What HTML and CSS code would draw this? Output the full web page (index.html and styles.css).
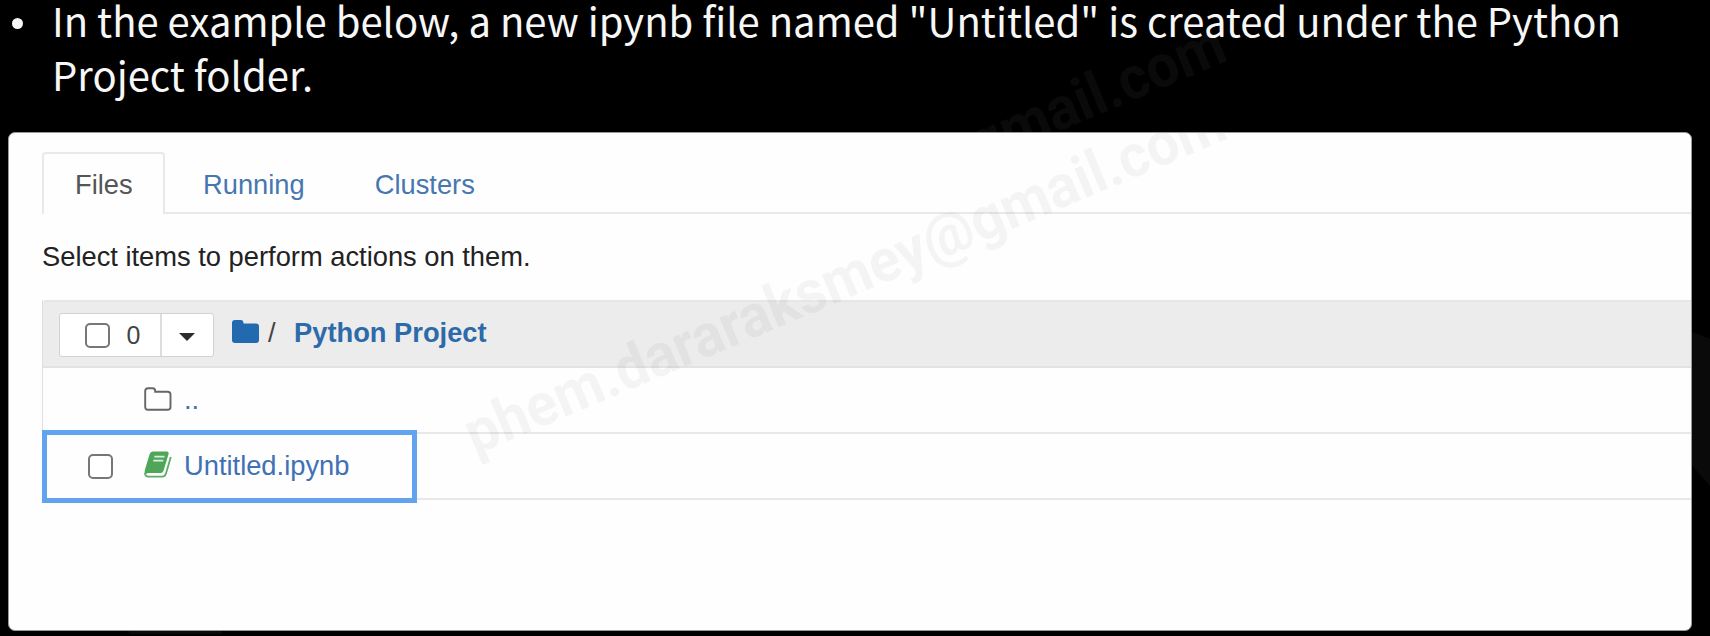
FILE: index.html
```html
<!DOCTYPE html>
<html lang="en">
<head>
<meta charset="utf-8">
<title>Jupyter file list</title>
<link rel="stylesheet" href="styles.css">
</head>
<body>
<main class="slide">
  <svg class="mark mark-dark" width="1710" height="636" viewBox="0 0 1710 636">
    <text transform="translate(475 377) rotate(-22.8)" textLength="819" lengthAdjust="spacingAndGlyphs">phem.dararaksmey@gmail.com</text>
    <path d="M1690 331L1710 339V486L1690 463Z"/>
    <path d="M129 630H222V634H129Z"/>
  </svg>
  <ul class="heading">
    <li>In the example below, a new ipynb file named "Untitled" is created under the Python<br>Project folder.</li>
  </ul>
  <section class="panel">
    <nav class="tabs">
      <a class="tab active">Files</a>
      <a class="tab running">Running</a>
      <a class="tab">Clusters</a>
    </nav>
    <p class="hint">Select items to perform actions on them.</p>
    <div class="list">
      <div class="toolbar">
        <div class="selector">
          <div class="select-all"><span class="box"></span><span>0</span></div>
          <div class="dropdown"><span class="caret"></span></div>
        </div>
        <svg class="home" width="27" height="23" viewBox="0 0 27 23"><path d="M3 0H9Q11.500 0 11.500 3.500H24Q27 3.500 27 6.500V20Q27 23 24 23H3Q0 23 0 20V3Q0 0 3 0Z" fill="#2369b0"/></svg>
        <span class="slash">/</span>
        <span class="crumb">Python Project</span>
      </div>
      <div class="row">
        <span class="check-cell"></span>
        <svg class="icon" width="28" height="24" viewBox="0 0 28 24"><path d="M4 1.200H8.500Q11.200 1.200 11.200 4V4.800H23.500Q26.500 4.800 26.500 7.500V20Q26.500 22.800 23.500 22.800H4Q1.200 22.800 1.200 20V4Q1.200 1.200 4 1.200Z" fill="none" stroke="#666" stroke-width="1.900"/></svg>
        <a class="name">..</a>
      </div>
      <div class="row">
        <span class="check-cell"><span class="box"></span></span>
        <svg class="icon" width="28" height="27" viewBox="0 0 28 27">
          <path d="M8.800 .5H22.500Q25.300 .5 24.500 3.300L19.600 19.500Q18.800 22 16.500 22H4.500Q2.800 22 2.500 23Q.2 22 .8 19.200L5.500 3.500Q6.500 .5 8.800 .5Z" fill="#4fa659"/>
          <path d="M26.800 6L22 22.400Q21 25.600 18 25.600H4.500Q1 25.600 .9 21.500" fill="none" stroke="#5bae65" stroke-width="1.800"/>
          <path d="M10.300 5.700H20.500M9.300 9.600H19.300" stroke="#d9f0dc" stroke-width="1.700"/>
        </svg>
        <a class="name">Untitled.ipynb</a>
        <span class="highlight"></span>
      </div>
    </div>
    <svg class="mark mark-light" width="1684" height="499" viewBox="9 133 1684 499">
      <text transform="translate(475 455) rotate(-22.8)" textLength="819" lengthAdjust="spacingAndGlyphs">phem.dararaksmey@gmail.com</text>
    </svg>
  </section>
</main>
</body>
</html>
```
FILE: styles.css
```css
* { box-sizing: border-box; }
body { margin: 0; background: #000; }
.slide {
  position: relative;
  width: 1710px;
  height: 636px;
  overflow: hidden;
  background: #000;
  font-family: "Liberation Sans", Arial, sans-serif;
}
.mark { position: absolute; left: 0; top: 0; pointer-events: none; }
.mark text { font: bold 60px Roboto, sans-serif; }
.mark-dark { fill: #0a0a0a; }
.mark-light { fill: rgba(0, 0, 0, .04); }
.heading {
  position: relative;
  height: 132px;
  margin: 0;
  padding: 0 0 0 52px;
  list-style: none;
  color: #f7f7f7;
  font: 40px/54px "Noto Sans CJK SC", sans-serif;
  white-space: nowrap;
}
.heading li { margin-top: -7px; display: inline-block; }
.heading li::before {
  content: "";
  position: absolute;
  left: 12px;
  top: 18px;
  width: 11px;
  height: 11px;
  border-radius: 50%;
  background: #f7f7f7;
}
.panel {
  position: relative;
  width: 1684px;
  height: 499px;
  margin-left: 8px;
  padding: 19px 0 0 33px;
  overflow: hidden;
  border: 1px solid #999;
  border-radius: 7px;
  background: #fefefe;
  color: #222;
  font-size: 27.300px;
}
.tabs { display: flex; height: 62px; border-bottom: 2px solid #e9e9e9; }
.tab { padding: 0 35px; line-height: 65px; color: #4677b0; }
.tab.active {
  width: 123px;
  height: 62px;
  padding: 0 0 0 31px;
  border: 2px solid #e9e9e9;
  border-bottom: 0;
  border-radius: 4px 4px 0 0;
  background: #fefefe;
  color: #555;
  line-height: 62px;
}
.tab.running { padding-left: 38px; }
.hint { display: flex; align-items: center; height: 86px; margin: 0; }
.list { border-left: 1px solid #dedede; }
.toolbar {
  display: flex;
  height: 68px;
  padding: 11px 0 0 16px;
  border-top: 2px solid #e6e6e6;
  border-bottom: 2px solid #e2e2e2;
  border-radius: 3px 0 0 0;
  background: #ececec;
}
.selector {
  display: flex;
  width: 155px;
  height: 44px;
  border: 1px solid #d2d2d2;
  border-radius: 3px;
  background: #fff;
}
.select-all {
  display: flex;
  align-items: center;
  gap: 16.500px;
  width: 102px;
  padding-left: 25px;
  border-right: 2px solid #ddd;
  color: #444;
  font-size: 25px;
}
.dropdown { display: flex; flex: 1; align-items: center; justify-content: center; }
.caret { margin: 3px 1px 0 0; border: 8px solid transparent; border-top: 8px solid #2c2c2c; border-bottom: 0; }
.box { width: 25px; height: 25px; border: 2px solid #777; border-radius: 5px; background: #fff; }
.home { margin: 7px 0 0 18px; }
.slash { width: 8px; margin: 0 18px 0 9px; line-height: 40px; color: #444; }
.crumb { color: #2c6aaa; font-weight: bold; line-height: 40px; }
.row {
  position: relative;
  display: flex;
  align-items: center;
  height: 66px;
  border-bottom: 2px solid #e8e8e8;
}
.check-cell { display: flex; width: 101px; padding-left: 45px; }
.icon { width: 28px; margin-top: -3px; }
.name { margin-left: 12px; color: #4071b5; }
.highlight {
  position: absolute;
  left: -1px;
  top: -4px;
  width: 375px;
  height: 73px;
  border: 5px solid #62a3ef;
}
```
